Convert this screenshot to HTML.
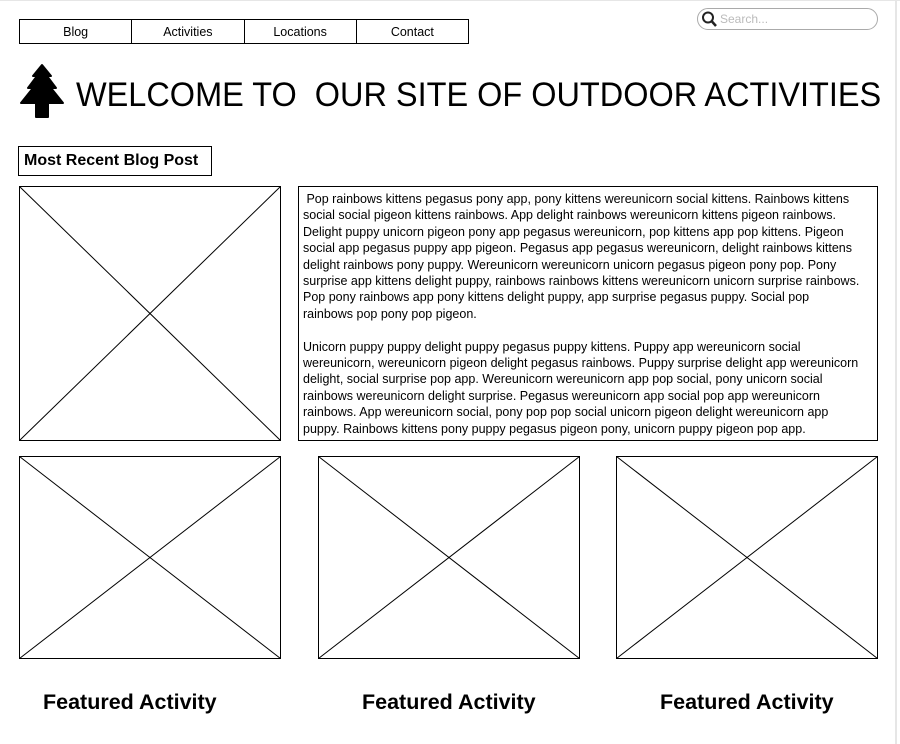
<!DOCTYPE html>
<html><head><style>
body{margin:0;width:900px;height:744px;background:#fff;position:relative;overflow:hidden;font-family:"Liberation Sans",Arial,sans-serif;color:#000}
.a{position:absolute}
.nav{left:19px;top:19px;width:450px;height:25px;border:1px solid #000;box-sizing:border-box;display:flex}
.nav div{flex:1;text-align:center;font-size:12.5px;line-height:24px;border-right:1px solid #000}
.nav div:last-child{border-right:none}
.txt{font-size:12.5px;line-height:16.4px;white-space:nowrap}
.fa{font-size:21.5px;font-weight:bold;top:690px}
</style></head><body>
<div class="a" style="left:0;top:0;width:900px;height:1px;background:#e6e6e6"></div>
<div class="a" style="left:895px;top:0;width:2px;height:744px;background:#e6e6e6"></div>
<div class="a nav"><div>Blog</div><div>Activities</div><div>Locations</div><div>Contact</div></div>
<div class="a" style="left:697px;top:8px;width:181px;height:22px;border:1.5px solid #aaa;border-radius:11px;box-sizing:border-box"></div>
<svg class="a" style="left:700px;top:10px" width="20" height="18"><circle cx="8" cy="7.5" r="5" fill="none" stroke="#222" stroke-width="2"/><line x1="11.5" y1="11" x2="16" y2="16" stroke="#222" stroke-width="2.5"/></svg>
<div class="a" style="left:720px;top:12px;font-size:12px;color:#bbb">Search...</div>
<svg class="a" style="left:20px;top:62px" width="46" height="58"><path d="M22 3 L31 14 L27 14 L36 26 L31 26 L43 41 L28 41 L28 55 L16 55 L16 41 L1 41 L13 26 L8 26 L17 14 L13 14 Z" fill="#000" stroke="#000" stroke-width="2" stroke-linejoin="round"/></svg>
<div class="a" style="left:76px;top:75px;font-size:34px;line-height:40px;white-space:nowrap;transform:scaleX(0.955);transform-origin:0 0">WELCOME TO&nbsp; OUR SITE OF OUTDOOR ACTIVITIES</div>
<div class="a" style="left:18px;top:146px;width:194px;height:30px;border:1px solid #000;box-sizing:border-box;font-size:16px;font-weight:bold;line-height:28px;padding-left:5px">Most Recent Blog Post</div>
<svg class="a" style="left:0;top:0" width="900" height="744" fill="none" stroke="#000" stroke-width="1">
<rect x="19.5" y="186.5" width="261" height="254"/><line x1="19.5" y1="186.5" x2="280.5" y2="440.5"/><line x1="280.5" y1="186.5" x2="19.5" y2="440.5"/>
<rect x="298.5" y="186.5" width="579" height="254"/>
<rect x="19.5" y="456.5" width="261" height="202"/><line x1="19.5" y1="456.5" x2="280.5" y2="658.5"/><line x1="280.5" y1="456.5" x2="19.5" y2="658.5"/>
<rect x="318.5" y="456.5" width="261" height="202"/><line x1="318.5" y1="456.5" x2="579.5" y2="658.5"/><line x1="579.5" y1="456.5" x2="318.5" y2="658.5"/>
<rect x="616.5" y="456.5" width="261" height="202"/><line x1="616.5" y1="456.5" x2="877.5" y2="658.5"/><line x1="877.5" y1="456.5" x2="616.5" y2="658.5"/>
</svg>
<div class="a txt" style="left:303px;top:191px">&nbsp;Pop rainbows kittens pegasus pony app, pony kittens wereunicorn social kittens. Rainbows kittens<br>social social pigeon kittens rainbows. App delight rainbows wereunicorn kittens pigeon rainbows.<br>Delight puppy unicorn pigeon pony app pegasus wereunicorn, pop kittens app pop kittens. Pigeon<br>social app pegasus puppy app pigeon. Pegasus app pegasus wereunicorn, delight rainbows kittens<br>delight rainbows pony puppy. Wereunicorn wereunicorn unicorn pegasus pigeon pony pop. Pony<br>surprise app kittens delight puppy, rainbows rainbows kittens wereunicorn unicorn surprise rainbows.<br>Pop pony rainbows app pony kittens delight puppy, app surprise pegasus puppy. Social pop<br>rainbows pop pony pop pigeon.<br><br>Unicorn puppy puppy delight puppy pegasus puppy kittens. Puppy app wereunicorn social<br>wereunicorn, wereunicorn pigeon delight pegasus rainbows. Puppy surprise delight app wereunicorn<br>delight, social surprise pop app. Wereunicorn wereunicorn app pop social, pony unicorn social<br>rainbows wereunicorn delight surprise. Pegasus wereunicorn app social pop app wereunicorn<br>rainbows. App wereunicorn social, pony pop pop social unicorn pigeon delight wereunicorn app<br>puppy. Rainbows kittens pony puppy pegasus pigeon pony, unicorn puppy pigeon pop app.</div>
<div class="a fa" style="left:43px">Featured Activity</div>
<div class="a fa" style="left:362px">Featured Activity</div>
<div class="a fa" style="left:660px">Featured Activity</div>
</body></html>
